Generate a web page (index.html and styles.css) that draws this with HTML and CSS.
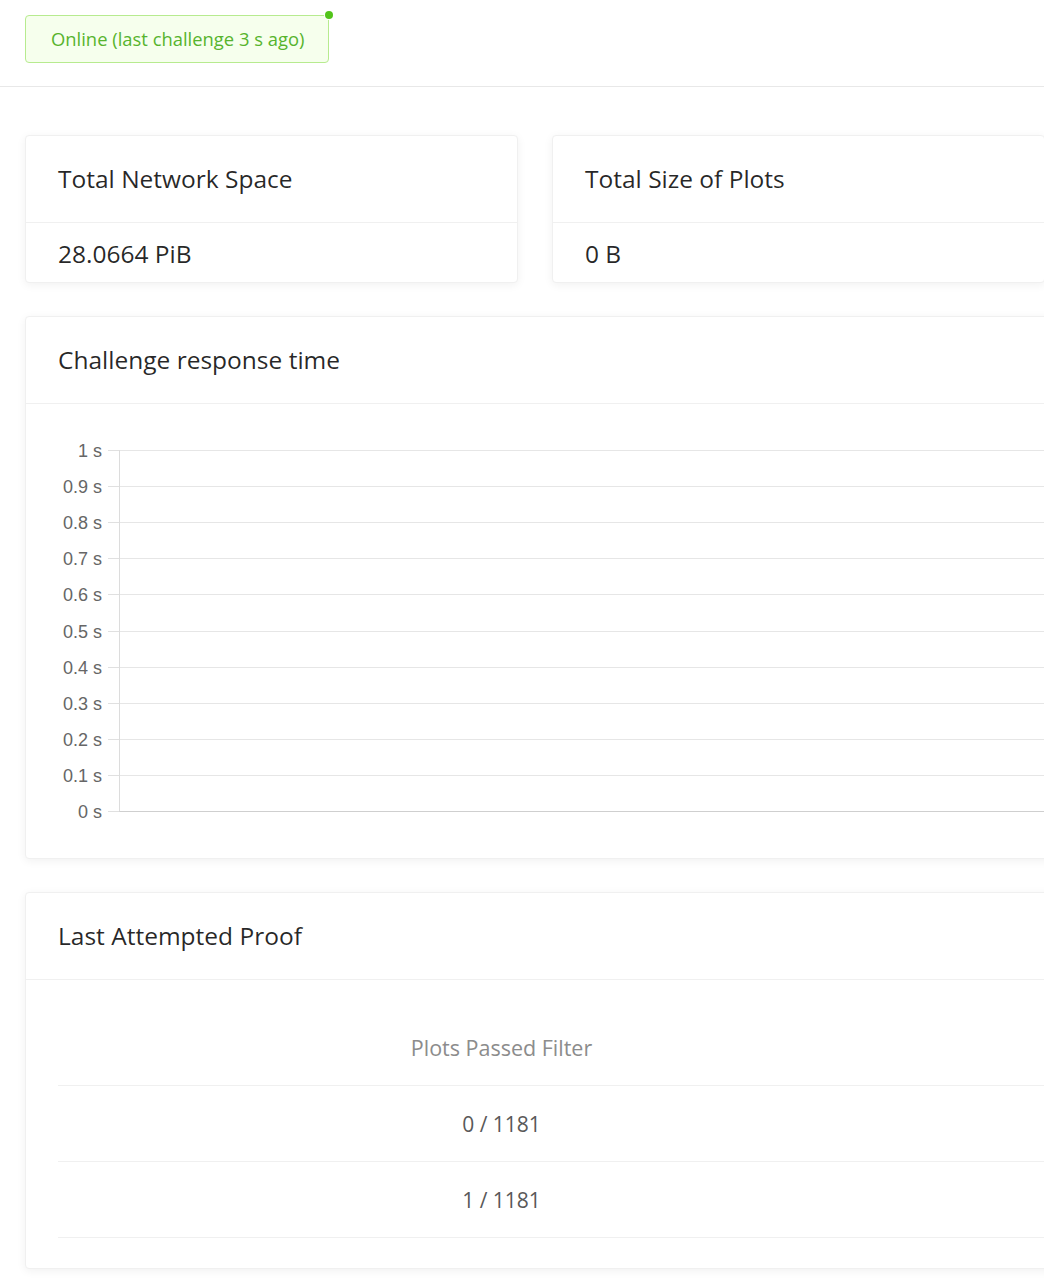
FILE: index.html
```html
<!DOCTYPE html>
<html lang="en">
<head>
    <meta charset="UTF-8">
    <meta name="viewport" content="width=device-width, initial-scale=1.0">
    <title>Farmer</title>
    <link rel="stylesheet" href="styles.css">
</head>
<body>

    <!-- Status bar -->
    <div class="topbar">
        <span class="status-tag">
            Online (last challenge 3 s ago)
            <span class="status-dot"></span>
        </span>
    </div>

    <div class="content">

        <!-- Stats row -->
        <div class="stats">
            <div class="card">
                <div class="card-head">Total Network Space</div>
                <div class="card-body stat-value">28.0664 PiB</div>
            </div>
            <div class="card">
                <div class="card-head">Total Size of Plots</div>
                <div class="card-body stat-value">0 B</div>
            </div>
        </div>

        <!-- Response time chart -->
        <div class="card">
            <div class="card-head">Challenge response time</div>
            <div class="chart-body">
                <svg class="chart" id="chart" width="1545" height="454"></svg>
            </div>
        </div>

        <!-- Last attempted proof -->
        <div class="card">
            <div class="card-head">Last Attempted Proof</div>
            <div class="card-body table-body">
                <table class="proof-table">
                    <colgroup>
                        <col class="col-main">
                        <col>
                    </colgroup>
                    <thead>
                        <tr><th>Plots Passed Filter</th><th></th></tr>
                    </thead>
                    <tbody>
                        <tr><td>0 / 1181</td><td></td></tr>
                        <tr><td>1 / 1181</td><td></td></tr>
                    </tbody>
                </table>
            </div>
        </div>

    </div>

    <script>
        const chart = document.getElementById('chart');
        const ns = 'http://www.w3.org/2000/svg';
        const chartTop = 46;
        const step = 36.1;

        function line(x1, y1, x2, y2, cls) {
            const el = document.createElementNS(ns, 'line');
            el.setAttribute('x1', x1);
            el.setAttribute('y1', y1);
            el.setAttribute('x2', x2);
            el.setAttribute('y2', y2);
            el.setAttribute('class', cls);
            chart.appendChild(el);
        }

        // grid lines, ticks and labels from 1 s down to 0 s
        for (let i = 0; i <= 10; i++) {
            const y = Math.round(chartTop + i * step) + 0.5;
            const value = (10 - i) / 10;
            line(82, y, 93, y, 'tick');
            line(93, y, 1545, y, i === 10 ? 'base' : 'grid');

            const label = document.createElementNS(ns, 'text');
            label.setAttribute('x', 76);
            label.setAttribute('y', y + 6);
            label.setAttribute('class', 'label');
            label.textContent = (value === 1 ? '1' : value === 0 ? '0' : value.toFixed(1)) + ' s';
            chart.appendChild(label);
        }

        // y axis
        line(93.5, chartTop, 93.5, Math.round(chartTop + 10 * step) + 0.5, 'axis');
    </script>

</body>
</html>
```

FILE: styles.css
```css
html, body {
    overflow: hidden;
}

body {
    margin: 0;
    padding: 0;
    background-color: #fff;
    font-family: "Open Sans", "Noto Sans", sans-serif;
    color: rgba(0, 0, 0, 0.85);
}

.topbar {
    padding: 15px 25px 23px;
    border-bottom: 1px solid #e8e8e8;
}

.status-tag {
    position: relative;
    display: inline-block;
    box-sizing: border-box;
    height: 48px;
    line-height: 46px;
    padding: 0 24px 0 25px;
    font-size: 18.4px;
    color: #56b42d;
    background-color: #f6ffed;
    border: 1px solid #b7eb8f;
    border-radius: 4px;
}

.status-dot {
    position: absolute;
    top: -5px;
    right: -5px;
    width: 8px;
    height: 8px;
    border-radius: 50%;
    background-color: #52c41a;
    box-shadow: 0 0 0 1px #fff;
}

.content {
    width: 1547px;
    padding: 48px 25px;
    display: flex;
    flex-direction: column;
    gap: 33px;
}

.stats {
    display: grid;
    grid-template-columns: repeat(3, 1fr);
    gap: 34px;
}

.card {
    background-color: #fff;
    border: 1px solid #f0f0f0;
    border-radius: 4px;
    box-shadow: 0 2px 10px rgba(0, 0, 0, 0.06);
}

.card-head {
    height: 86px;
    display: flex;
    align-items: center;
    padding: 0 32px;
    font-size: 24.5px;
    line-height: 1;
    color: rgba(0, 0, 0, 0.85);
    border-bottom: 1px solid #f0f0f0;
}

.card-body {
    padding: 16px 32px;
}

.stat-value {
    padding-top: 18px;
    padding-bottom: 15px;
    font-size: 24.5px;
    line-height: 26px;
    color: rgba(0, 0, 0, 0.85);
}

.chart-body {
    height: 454px;
    overflow: hidden;
}

.chart {
    display: block;
}

.chart .grid {
    stroke: #e6e6e6;
    stroke-width: 1;
}

.chart .tick {
    stroke: #e0e0e0;
    stroke-width: 1;
}

.chart .base {
    stroke: #cfcfcf;
    stroke-width: 1;
}

.chart .axis {
    stroke: #dcdcdc;
    stroke-width: 1;
}

.chart .label {
    font-family: "Liberation Sans", Arial, sans-serif;
    font-size: 18px;
    fill: #666;
    text-anchor: end;
}

.table-body {
    padding: 30px 32px;
}

.proof-table {
    width: 100%;
    border-collapse: collapse;
    table-layout: fixed;
}

.col-main {
    width: 887px;
}

.proof-table th,
.proof-table td {
    height: 75px;
    padding: 0;
    text-align: center;
    border-bottom: 1px solid #f0f0f0;
}

.proof-table th {
    font-size: 21.5px;
    font-weight: 400;
    color: #8c8c8c;
}

.proof-table td {
    font-size: 21px;
    color: #595959;
}
```
